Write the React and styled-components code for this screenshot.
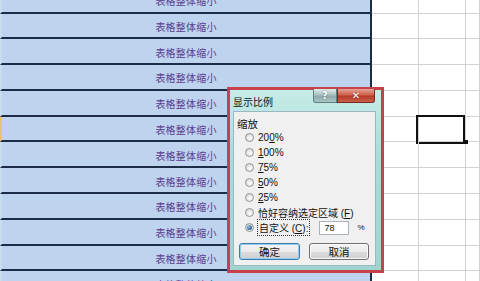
import React from 'react'
import styled, { createGlobalStyle } from 'styled-components'

const GlobalStyle = createGlobalStyle`
  html, body {
    margin: 0;
    padding: 0;
    background: #fff;
    overflow: hidden;
  }
  body {
    font-family: "Liberation Sans", "Noto Sans CJK SC", sans-serif;
  }
`

const Sheet = styled.div`
  position: relative;
  width: 480px;
  height: 281px;
  overflow: hidden;
  background: #fff;
`

const Rows = styled.div`
  display: flex;
  flex-direction: column;
  margin-top: -12.3px;
`

const Row = styled.div`
  display: flex;
  height: 25.8px;
  flex-shrink: 0;
`

const BlueCell = styled.div`
  box-sizing: border-box;
  width: 372px;
  height: 100%;
  display: flex;
  align-items: center;
  justify-content: center;
  padding-top: 2px;
  background: #bed3ed;
  border-left: 2px solid ${p => (p.active ? '#f0c071' : '#c9dbef')};
  border-right: 2px solid #1c2b46;
  border-bottom: 2px solid #1c2b46;
  color: #5b3c8f;
  font-family: "Noto Sans CJK SC", sans-serif;
  font-size: 10px;
  letter-spacing: 0.2px;
`

const GridCell = styled.div`
  position: relative;
  box-sizing: border-box;
  width: ${p => p.w}px;
  height: 100%;
  border-right: 1px solid #d2d2d2;
  border-bottom: 1px solid #d2d2d2;

  ${p => p.selected && `
    &::after {
      content: '';
      position: absolute;
      left: -3px;
      top: -2px;
      width: 45px;
      height: 25px;
      border: 2px solid #111;
    }
    &::before {
      content: '';
      position: absolute;
      right: -3px;
      bottom: -3px;
      width: 4px;
      height: 4px;
      background: #111;
      z-index: 1;
    }
  `}
`

const Dialog = styled.div`
  position: absolute;
  left: 227px;
  top: 87px;
  width: 157px;
  height: 186px;
  box-sizing: border-box;
  border: 3px solid #c7404a;
  display: flex;
`

const Frame = styled.div`
  flex: 1;
  display: flex;
  flex-direction: column;
  padding: 0 5px 4px 3px;
  background: linear-gradient(180deg, #c6ece7 0%, #a7dcd7 40%, #9fd4d0 100%);
`

const TitleBar = styled.div`
  height: 21px;
  display: flex;
  align-items: flex-start;
  justify-content: space-between;
`

const Title = styled.div`
  margin-top: 4px;
  font-family: "Noto Sans CJK SC", sans-serif;
  font-size: 10px;
  color: #111;
`

const CaptionButtons = styled.div`
  display: flex;
  margin-right: 1px;
  margin-top: -1px;
`

const CaptionButton = styled.div`
  height: 14px;
  width: ${p => p.w}px;
  box-sizing: border-box;
  display: flex;
  align-items: center;
  justify-content: center;
  color: #fff;
  font-family: "DejaVu Sans", sans-serif;
  font-weight: bold;
  font-size: 10px;
  border: 1px solid ${p => (p.close ? '#7a2a22' : '#5f7f80')};
  border-top: none;
  border-radius: ${p => (p.close ? '0 0 3px 0' : '0 0 0 3px')};
  background: ${p =>
    p.close
      ? 'linear-gradient(180deg, #e9a497 0%, #d0604d 45%, #b33b28 55%, #c9604a 100%)'
      : 'linear-gradient(180deg, #dfecea 0%, #a9c2c2 45%, #8eaaab 55%, #a9c7c6 100%)'};
  text-shadow: 0 0 2px rgba(0, 0, 0, 0.5);
`

const Panel = styled.div`
  flex: 1;
  display: flex;
  flex-direction: column;
  background: #f0f0f0;
  border: 1px solid #9ab8bd;
  box-sizing: border-box;
  padding-left: 3px;
`

const GroupLabel = styled.div`
  margin-top: 5px;
  height: 13px;
  line-height: 13px;
  font-family: "Noto Sans CJK SC", sans-serif;
  font-size: 10.5px;
  color: #111;
`

const Options = styled.div`
  display: flex;
  flex-direction: column;
  padding-left: 8px;
`

const Option = styled.div`
  height: 15px;
  display: flex;
  align-items: center;
  gap: 4px;
  font-size: 10px;
  color: #111;
`

const Radio = styled.span`
  width: 9px;
  height: 9px;
  box-sizing: border-box;
  border-radius: 50%;
  border: 1px solid #939393;
  background: radial-gradient(circle at 60% 65%, #ffffff 0%, #dcdcdc 70%, #c8c8c8 100%);
  display: flex;
  align-items: center;
  justify-content: center;
  flex-shrink: 0;

  &::after {
    content: '';
    width: 5px;
    height: 5px;
    border-radius: 50%;
    background: ${p => (p.checked ? 'radial-gradient(circle at 35% 35%, #8fc3ea 0%, #2a5f93 70%)' : 'transparent')};
  }
`

const Label = styled.span`
  font-family: "Liberation Sans", "Noto Sans CJK SC", sans-serif;
  font-size: 10px;
  white-space: nowrap;
  ${p => p.focus && `
    outline: 1px dotted #333;
    outline-offset: 0px;
    padding: 0 1px;
  `}
`

const ZoomInput = styled.div`
  margin-left: 6px;
  width: 30px;
  height: 14px;
  box-sizing: border-box;
  border: 1px solid #a9b4be;
  background: #fff;
  font-size: 9px;
  line-height: 12px;
  padding-left: 4px;
`

const Percent = styled.span`
  margin-left: 4px;
  font-size: 8px;
`

const ButtonRow = styled.div`
  display: flex;
  gap: 9px;
  margin-top: 8px;
  padding-left: 2px;
`

const Button = styled.div`
  width: ${p => p.w}px;
  height: 17px;
  box-sizing: border-box;
  border-radius: 3px;
  border: 1px solid ${p => (p.primary ? '#3d7bad' : '#707070')};
  box-shadow: ${p => (p.primary ? 'inset 0 0 0 1px #8fd0f2' : 'inset 0 0 0 1px #fafafa')};
  background: linear-gradient(180deg, #f3f3f3 0%, #ebebeb 50%, #dddddd 51%, #cfcfcf 100%);
  display: flex;
  align-items: center;
  justify-content: center;
  font-family: "Noto Sans CJK SC", sans-serif;
  font-size: 10.5px;
  color: #111;
`

const options = [
  { key: 'z200', label: <>20<u>0</u>%</> },
  { key: 'z100', label: <><u>1</u>00%</> },
  { key: 'z75', label: <><u>7</u>5%</> },
  { key: 'z50', label: <><u>5</u>0%</> },
  { key: 'z25', label: <><u>2</u>5%</> },
  { key: 'fit', label: <>恰好容纳选定区域 (<u>F</u>)</> },
]

const rowCount = 12

const App = () => (
  <>
    <GlobalStyle />
    <Sheet>
      <Rows>
        {Array.from({ length: rowCount }).map((_, i) => (
          <Row key={i}>
            <BlueCell active={i === 5}>表格整体缩小</BlueCell>
            <GridCell w={47} />
            <GridCell w={47} selected={i === 5} />
            <GridCell w={14} />
          </Row>
        ))}
      </Rows>

      <Dialog>
        <Frame>
          <TitleBar>
            <Title>显示比例</Title>
            <CaptionButtons>
              <CaptionButton w={24}>?</CaptionButton>
              <CaptionButton w={38} close>✕</CaptionButton>
            </CaptionButtons>
          </TitleBar>
          <Panel>
            <GroupLabel>缩放</GroupLabel>
            <Options>
              {options.map(o => (
                <Option key={o.key}>
                  <Radio />
                  <Label>{o.label}</Label>
                </Option>
              ))}
              <Option>
                <Radio checked />
                <Label focus>自定义 (<u>C</u>):</Label>
                <ZoomInput>78</ZoomInput>
                <Percent>%</Percent>
              </Option>
            </Options>
            <ButtonRow>
              <Button w={61} primary>确定</Button>
              <Button w={60}>取消</Button>
            </ButtonRow>
          </Panel>
        </Frame>
      </Dialog>
    </Sheet>
  </>
)

export default App
